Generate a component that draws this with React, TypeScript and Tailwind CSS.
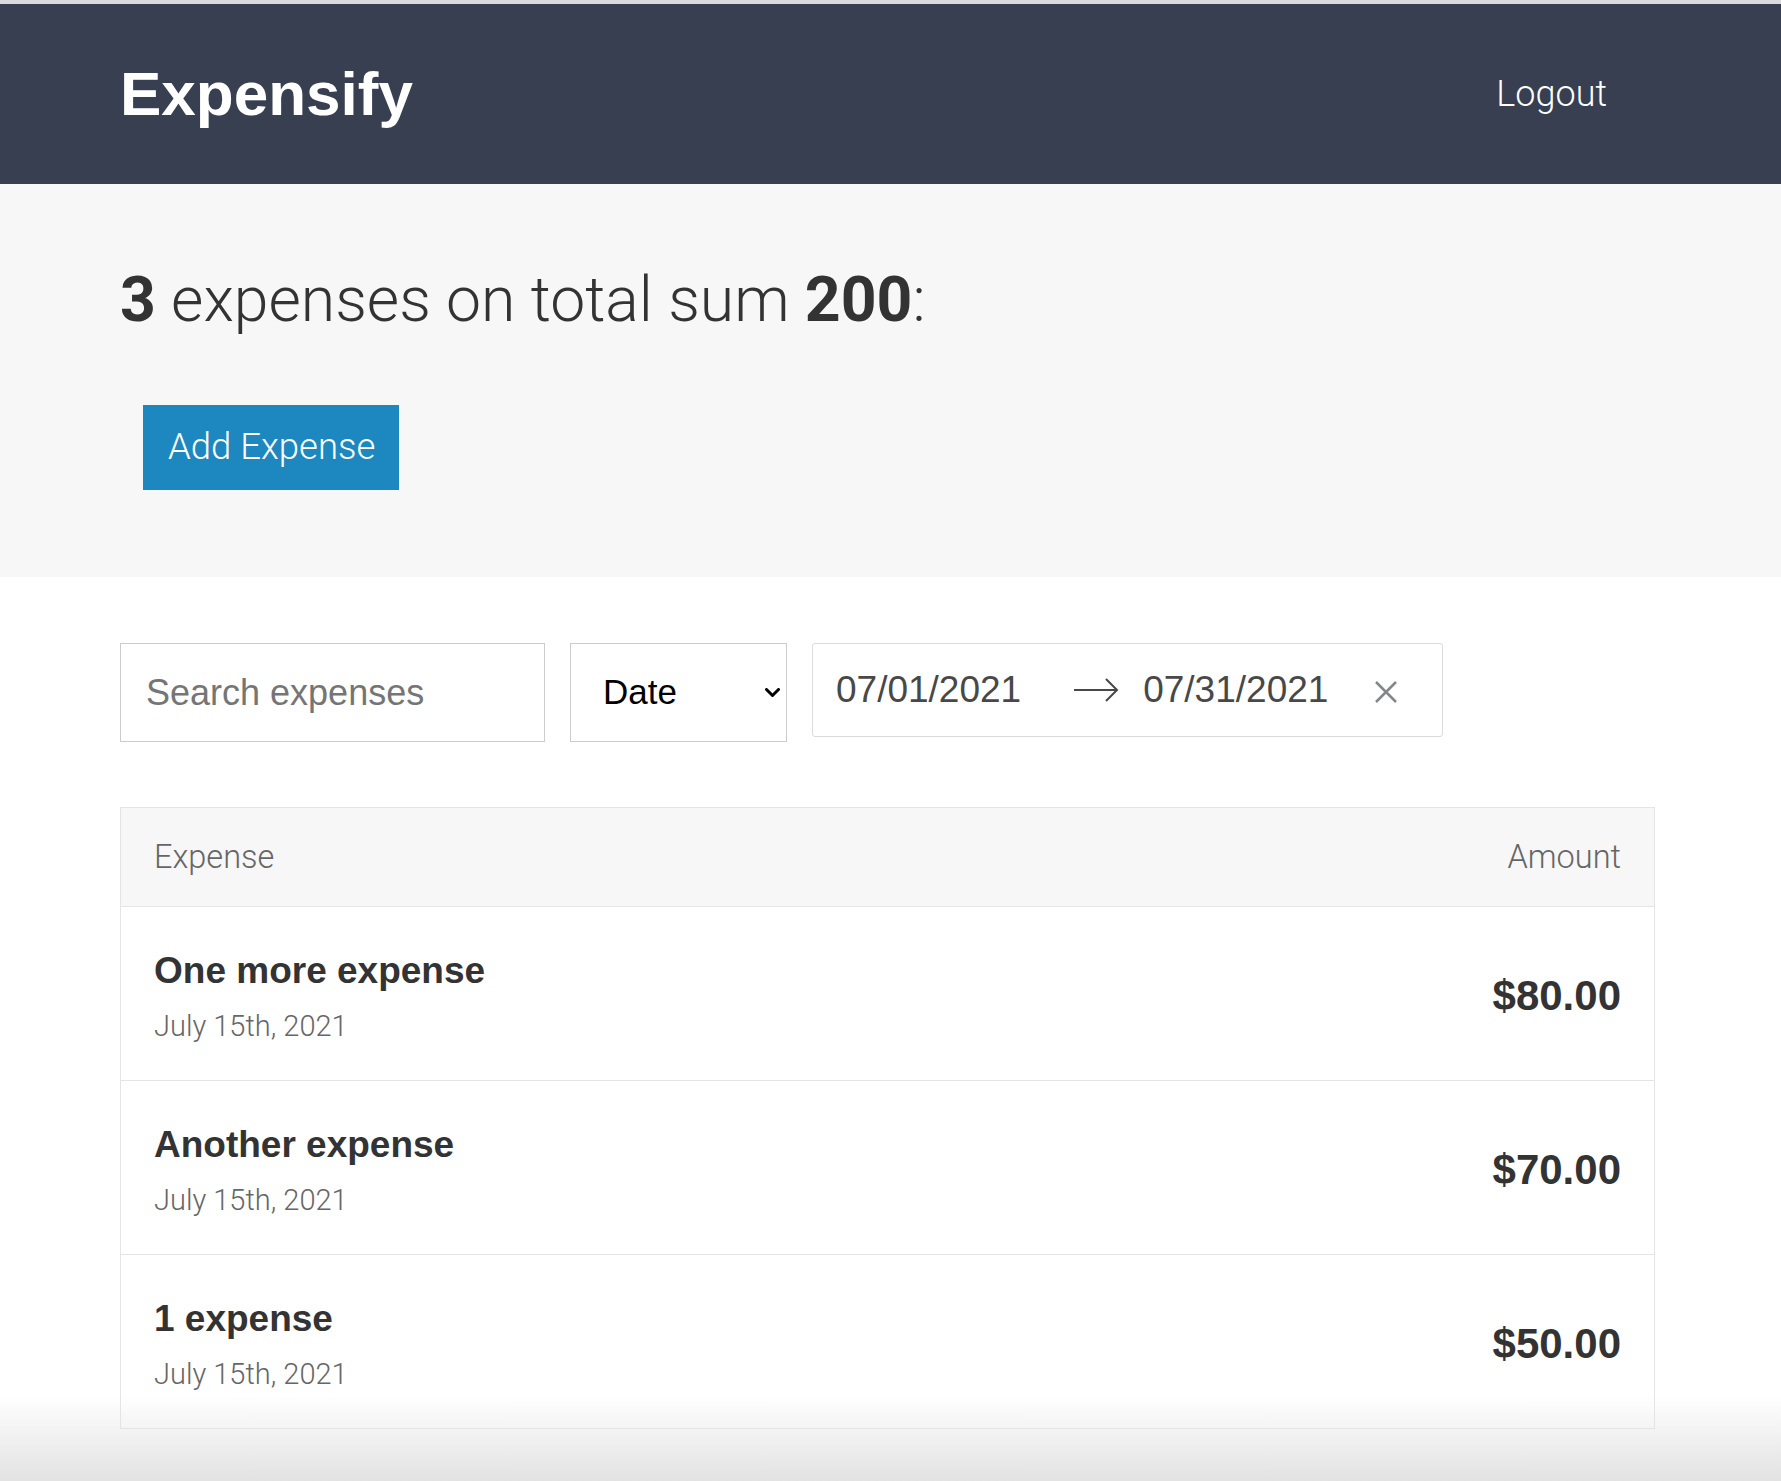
const expenses = [
  { id: 1, title: "One more expense", date: "July 15th, 2021", amount: "$80.00" },
  { id: 2, title: "Another expense", date: "July 15th, 2021", amount: "$70.00" },
  { id: 3, title: "1 expense", date: "July 15th, 2021", amount: "$50.00" },
];

export default function App() {
  return (
    <div className="relative min-h-[1481px] bg-white font-['Liberation_Sans',Arial,sans-serif] overflow-hidden">
      {/* browser strip */}
      <div className="h-[4px] bg-[#d9dadc]" />

      {/* Header */}
      <header className="h-[180px] bg-[#373f51]">
        <div className="ml-[120px] w-[1535px] h-full flex items-center justify-between">
          <h1 className="text-[62px] font-bold text-white leading-none">Expensify</h1>
          <button className="mr-[48px] text-[36px] text-white font-['Roboto',sans-serif] font-light leading-none">
            Logout
          </button>
        </div>
      </header>

      {/* Page header */}
      <section className="h-[393px] bg-[#f7f7f7]">
        <div className="ml-[120px] w-[1535px] pt-[78px]">
          <h2 className="font-['Roboto',sans-serif] font-light text-[62.5px] leading-[1.2] text-[#333333]">
            <span className="font-bold">3</span> expenses on total sum <span className="font-bold">200</span>:
          </h2>
          <button className="mt-[68px] ml-[23px] h-[85px] w-[256px] bg-[#1c88bf] text-white text-[36.5px] font-['Roboto',sans-serif] font-light text-left pl-[25px]">
            Add Expense
          </button>
        </div>
      </section>

      {/* Filters */}
      <div className="ml-[120px] w-[1535px] mt-[66px] flex items-start gap-[25px]">
        <input
          type="text"
          placeholder="Search expenses"
          className="w-[425px] h-[99px] border border-[#cacccd] bg-white px-[25px] text-[36px] text-[#333] placeholder:text-[#757575] outline-none"
        />
        <div className="relative w-[217px] h-[99px]">
          <select className="appearance-none w-full h-full border border-[#cacccd] bg-white pl-[32px] text-[35px] text-black outline-none">
            <option>Date</option>
          </select>
          <svg
            className="absolute right-[7px] top-[45px] pointer-events-none"
            width="15"
            height="10"
            viewBox="0 0 15 10"
            fill="none"
          >
            <path d="M1.5 1.5 L7.5 7.5 L13.5 1.5" stroke="#000" strokeWidth="3" strokeLinecap="round" strokeLinejoin="round" />
          </svg>
        </div>
        <div className="w-[631px] h-[94px] border border-[#dbdbdb] rounded-[3px] bg-white flex items-center pl-[23px] text-[37px] text-[#484848]">
          <span>07/01/2021</span>
          <svg className="ml-[52px]" width="46" height="26" viewBox="0 0 46 26" fill="none">
            <path d="M1 13 H44 M33 2 L44 13 L33 24" stroke="#484848" strokeWidth="2" />
          </svg>
          <span className="ml-[24px]">07/31/2021</span>
          <svg className="ml-[46px] mt-[4px]" width="24" height="24" viewBox="0 0 24 24" fill="none">
            <path d="M2 2 L22 22 M22 2 L2 22" stroke="#82888a" strokeWidth="2.5" />
          </svg>
        </div>
      </div>

      {/* Table */}
      <div className="ml-[120px] w-[1535px] mt-[65px] border border-[#e5e5e5]">
        <div className="h-[99px] bg-[#f7f7f7] border-b border-[#e5e5e5] flex items-center justify-between px-[33px] font-['Roboto',sans-serif] font-light text-[32.5px] text-[#666666]">
          <span>Expense</span>
          <span>Amount</span>
        </div>
        {expenses.map((e) => (
          <div
            key={e.id}
            className="h-[174px] border-b border-[#e5e5e5] last:border-b-0 last:h-[173px] flex items-center justify-between px-[33px]"
          >
            <div className="flex flex-col pt-[6px]">
              <h3 className="text-[37px] font-bold leading-none text-[#333333]">{e.title}</h3>
              <span className="mt-[23px] text-[29px] font-['Roboto',sans-serif] font-light leading-none text-[#666666]">
                {e.date}
              </span>
            </div>
            <h3 className="pt-[4px] text-[42px] font-bold leading-none text-[#333333]">{e.amount}</h3>
          </div>
        ))}
      </div>

      {/* window shadow at the bottom edge */}
      <div className="absolute bottom-0 left-0 right-0 h-[85px] bg-gradient-to-b from-white/0 to-[#e2e2e2] pointer-events-none" />
    </div>
  );
}
